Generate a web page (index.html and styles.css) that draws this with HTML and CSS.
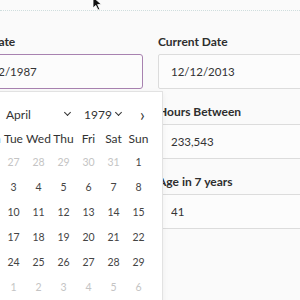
FILE: index.html
```html
<!DOCTYPE html>
<html lang="en">

<head>
    <meta charset="UTF-8">
    <meta name="viewport" content="width=device-width, initial-scale=1.0">
    <title>Age Calculator</title>
    <link rel="stylesheet" href="styles.css">
</head>

<body>

    <div class="topbar"></div>

    <svg class="cursor" width="12" height="14" viewBox="0 0 12 14">
        <path d="M1 0 L1 11 L3.8 8.4 L6 13 L7.8 12.2 L5.6 7.6 L9.4 7.4 Z" fill="#111" stroke="#fff" stroke-width="0.8" />
    </svg>

    <form class="calc">
        <div class="col">
            <div class="field">
                <label for="birth">Birth Date</label>
                <input type="text" id="birth" class="input focused" value="12/12/1987">

                <div class="datepicker">
                    <div class="dp-head">
                        <span class="dp-prev">&#8249;</span>
                        <span class="dp-month">April <i class="chev"></i></span>
                        <span class="dp-year">1979 <i class="chev"></i></span>
                        <span class="dp-next">&#8250;</span>
                    </div>
                    <div class="dp-grid dp-dow">
                        <span>Mon</span><span>Tue</span><span>Wed</span><span>Thu</span><span>Fri</span><span>Sat</span><span>Sun</span>
                    </div>
                    <div class="dp-grid dp-days" id="days"></div>
                </div>
            </div>
        </div>

        <div class="col">
            <div class="field">
                <label for="current">Current Date</label>
                <input type="text" id="current" class="input" value="12/12/2013">
            </div>
            <div class="field">
                <label for="hours">Hours Between</label>
                <input type="text" id="hours" class="input" value="233,543">
            </div>
            <div class="field">
                <label for="age">Age in 7 years</label>
                <input type="text" id="age" class="input" value="41">
            </div>
        </div>
    </form>

<script>
    const days = document.querySelector("#days");

    // april 1979 starts on a sunday, weeks start on monday
    const cells = [];
    for (let d = 26; d <= 31; d++) cells.push({ n: d, out: true });
    for (let d = 1; d <= 30; d++) cells.push({ n: d, out: false });
    for (let d = 1; cells.length < 42; d++) cells.push({ n: d, out: true });

    cells.forEach(c => {
        const span = document.createElement("span");
        span.textContent = c.n;
        if (c.out) span.className = "out";
        days.appendChild(span);
    });
</script>
</body>

</html>
```

FILE: styles.css
```css
*{
    margin: 0;
    box-sizing: border-box;
}
body{
    height: 100vh;
    background: #fafafa;
    font-family: Lato, "Open Sans", sans-serif;
    color: #333;
    overflow: hidden;
}
.topbar{
    height: 11px;
    border-bottom: 1px dotted #cfdede;
}
.cursor{
    position: absolute;
    top: -3px;
    left: 92px;
}
.calc{
    display: grid;
    grid-template-columns: 183px 200px;
    column-gap: 15px;
    margin-left: -40px;
    padding-top: 23px;
}
.field{
    position: relative;
    display: flex;
    flex-direction: column;
    margin-bottom: 15px;
}
label{
    font-size: 12px;
    font-weight: 700;
    line-height: 16px;
    margin-bottom: 4px;
    color: #2e2e2e;
}
.input{
    height: 35px;
    padding: 0 12px;
    border: 1px solid #dcdcdc;
    border-radius: 2px;
    background: #fcfcfc;
    font-family: Lato, sans-serif;
    font-size: 11.5px;
    color: #333;
}
.input.focused{
    border: 1.5px solid #a882b0;
    border-radius: 3px;
}

.datepicker{
    position: absolute;
    top: calc(100% + 2px);
    left: 2px;
    width: 201px;
    padding: 10px 13px 12px;
    background: #fff;
    border: 1px solid #e2e2e2;
    box-shadow: 0 2px 6px rgba(0, 0, 0, 0.06);
    z-index: 2;
}
.dp-head{
    display: flex;
    align-items: center;
    height: 24px;
    margin-bottom: 2px;
    font-size: 12px;
}
.dp-prev,
.dp-next{
    font-size: 17px;
    line-height: 1;
}
.dp-prev{
    width: 30px;
    padding-left: 9px;
}
.dp-month{
    display: flex;
    justify-content: space-between;
    align-items: center;
    width: 72px;
    padding-right: 8px;
}
.dp-year{
    display: flex;
    align-items: center;
    gap: 4px;
    width: 62px;
    padding-left: 6px;
}
.chev{
    width: 5px;
    height: 5px;
    border-right: 1.6px solid #333;
    border-bottom: 1.6px solid #333;
    transform: rotate(45deg);
    margin-top: -3px;
}
.dp-grid{
    display: grid;
    grid-template-columns: repeat(7, 25px);
    text-align: center;
}
.dp-dow{
    height: 22px;
    line-height: 22px;
    font-size: 12px;
    color: #333;
}
.dp-days span{
    height: 25px;
    line-height: 25px;
    font-size: 10.5px;
    color: #444;
}
.dp-days span.out{
    color: #c4c4c4;
}
```
